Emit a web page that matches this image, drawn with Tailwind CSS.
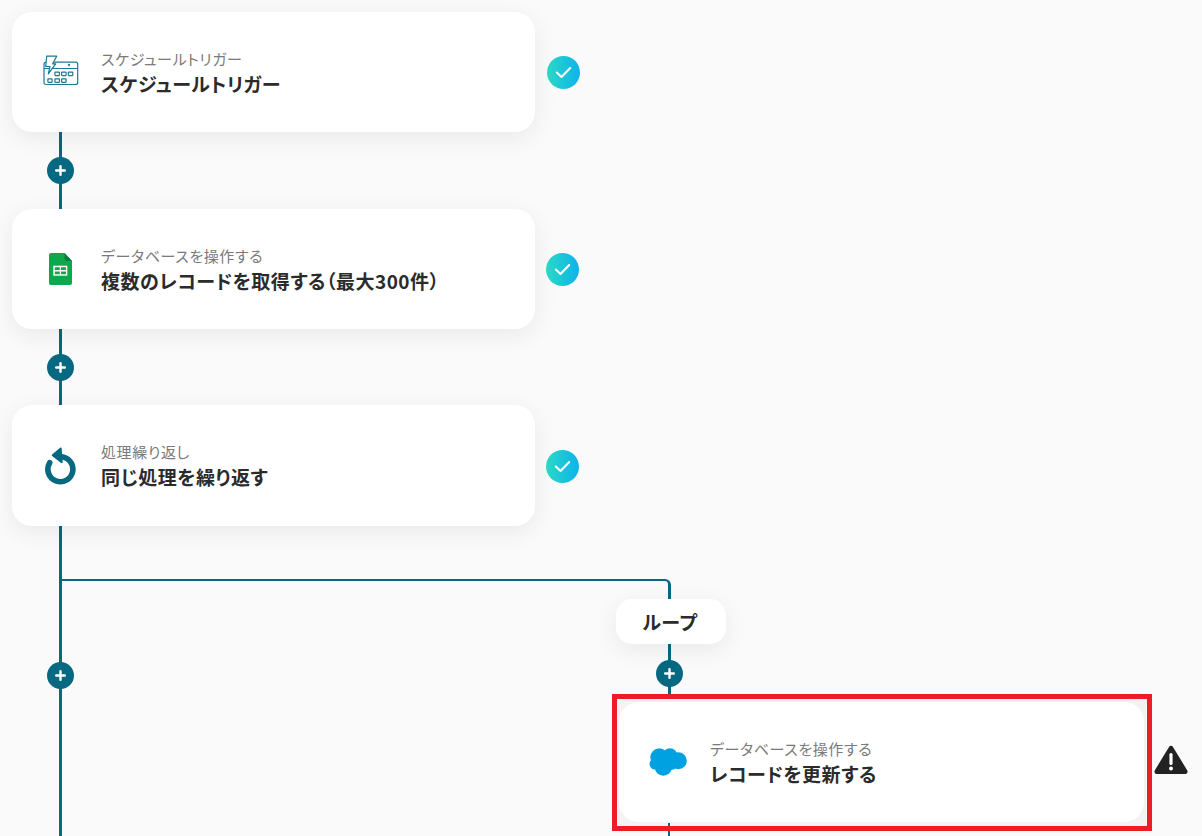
<!DOCTYPE html>
<html lang="ja">
<head>
<meta charset="utf-8">
<script src="https://cdn.jsdelivr.net/npm/@tailwindcss/browser@4"></script>
</head>
<body class="m-0 bg-[#fafafa]">
<div class="relative w-[1202px] h-[836px] overflow-hidden bg-[#fafafa] font-['Noto_Sans_CJK_JP','Noto_Sans',sans-serif] text-[#2b2b2b] [font-feature-settings:'palt']">

  <!-- connector lines -->
  <div class="absolute left-[59px] top-[130px] w-[3px] h-[706px] bg-[#066881]"></div>
  <div class="absolute left-[61px] top-[579px] w-[610px] h-[14px] border-t-2 border-r-[3px] border-[#066881] rounded-tr-[6px]"></div>
  <div class="absolute left-[668px] top-[590px] w-[3px] h-[110px] bg-[#066881]"></div>

  <!-- plus buttons -->
  <div class="absolute left-[47px] top-[157px] w-[27px] h-[27px] rounded-full bg-[#066881] flex items-center justify-center">
    <svg width="11" height="11" viewBox="0 0 11 11"><path d="M5.5 1.2v8.6M1.2 5.5h8.6" stroke="#fff" stroke-width="2.4" stroke-linecap="round"/></svg>
  </div>
  <div class="absolute left-[47px] top-[354px] w-[27px] h-[27px] rounded-full bg-[#066881] flex items-center justify-center">
    <svg width="11" height="11" viewBox="0 0 11 11"><path d="M5.5 1.2v8.6M1.2 5.5h8.6" stroke="#fff" stroke-width="2.4" stroke-linecap="round"/></svg>
  </div>
  <div class="absolute left-[47px] top-[662px] w-[27px] h-[27px] rounded-full bg-[#066881] flex items-center justify-center">
    <svg width="11" height="11" viewBox="0 0 11 11"><path d="M5.5 1.2v8.6M1.2 5.5h8.6" stroke="#fff" stroke-width="2.4" stroke-linecap="round"/></svg>
  </div>
  <div class="absolute left-[656px] top-[660px] w-[27px] h-[27px] rounded-full bg-[#066881] flex items-center justify-center">
    <svg width="11" height="11" viewBox="0 0 11 11"><path d="M5.5 1.2v8.6M1.2 5.5h8.6" stroke="#fff" stroke-width="2.4" stroke-linecap="round"/></svg>
  </div>

  <!-- card 1 -->
  <div class="absolute left-[12px] top-[12px] w-[523px] h-[120px] rounded-[20px] bg-white shadow-[0_6px_24px_rgba(0,0,0,0.07)] flex items-center pl-[31px] gap-[22px]">
    <svg class="w-[36px] h-[35px] shrink-0" viewBox="0 0 36 35" fill="none" stroke="#1b7a93" stroke-width="1.2">
      <path d="M1 9.200a2 2 0 0 1 2-2h29.700a2 2 0 0 1 2 2v18.300a2 2 0 0 1-2 2H3a2 2 0 0 1-2-2z"/>
      <path d="M1 13.500h34"/>
      <path d="M3.700 1.200h10L9.700 8.800h3L5.300 18.800 7 11.500H2.700z" fill="#fff" stroke-linejoin="round"/>
      <rect x="11.900" y="17.100" width="4.500" height="3.500" rx="0.500"/><rect x="18.600" y="17.100" width="4.500" height="3.500" rx="0.500"/><rect x="25.300" y="17.100" width="4.500" height="3.500" rx="0.500"/>
      <rect x="4.900" y="23.800" width="4.200" height="3.500" rx="0.500"/><rect x="11.900" y="23.800" width="4.500" height="3.500" rx="0.500"/><rect x="18.600" y="23.800" width="4.500" height="3.500" rx="0.500"/>
      <circle cx="26" cy="9.900" r="0.500" fill="#1b7a93"/>
    </svg>
    <div class="flex flex-col pt-[2px]">
      <div class="text-[15px] leading-[20px] tracking-[0.6px] text-[#7a7a7a]">スケジュールトリガー</div>
      <div class="text-[19px] leading-[28px] tracking-[0.5px] font-bold mt-px">スケジュールトリガー</div>
    </div>
  </div>

  <!-- card 2 -->
  <div class="absolute left-[12px] top-[209px] w-[523px] h-[120px] rounded-[20px] bg-white shadow-[0_6px_24px_rgba(0,0,0,0.07)] flex items-center pl-[37px] gap-[29px]">
    <svg class="w-[23px] h-[32px] shrink-0" viewBox="0 0 23 32">
      <path d="M2 0h13.500L23 8v22a2 2 0 0 1-2 2H2a2 2 0 0 1-2-2V2a2 2 0 0 1 2-2z" fill="#0da74e"/>
      <path d="M15.500 0L23 8h-5.500a2 2 0 0 1-2-2z" fill="#0a7d3c"/>
      <path d="M4.300 12.700h14v10h-14z" fill="#fff"/>
      <path d="M5.800 14.200h5v2.800h-5zM12 14.200h5v2.800h-5zM5.800 18.400h5v2.800h-5zM12 18.400h5v2.800h-5z" fill="#0da74e"/>
    </svg>
    <div class="flex flex-col pt-[2px]">
      <div class="text-[15px] leading-[20px] tracking-[0.6px] text-[#7a7a7a]">データベースを操作する</div>
      <div class="text-[19px] leading-[28px] tracking-[0.5px] font-bold mt-px">複数のレコードを取得する（最大300件）</div>
    </div>
  </div>

  <!-- card 3 -->
  <div class="absolute left-[12px] top-[405px] w-[523px] h-[121px] rounded-[20px] bg-white shadow-[0_6px_24px_rgba(0,0,0,0.07)] flex items-center pl-[32px] gap-[24px]">
    <svg class="w-[33px] h-[40px] shrink-0" viewBox="0 0 33 40" fill="none">
      <path d="M5.700 16.700A12.500 12.500 0 1 0 16.400 10.700" stroke="#066881" stroke-width="5.600" stroke-linecap="round"/>
      <path d="M16.700 2.500L8.700 9.200l9 7z" fill="#066881" stroke="#066881" stroke-width="2" stroke-linejoin="round"/>
    </svg>
    <div class="flex flex-col pt-[2px]">
      <div class="text-[15px] leading-[20px] tracking-[0.6px] text-[#7a7a7a]">処理繰り返し</div>
      <div class="text-[19px] leading-[28px] tracking-[0.5px] font-bold mt-px">同じ処理を繰り返す</div>
    </div>
  </div>

  <!-- status checks -->
  <div class="absolute left-[547px] top-[56px] w-[33px] h-[33px] rounded-full bg-gradient-to-r from-[#2bd9c4] to-[#10b2ea] flex items-center justify-center">
    <svg width="17" height="13" viewBox="0 0 17 13" fill="none"><path d="M1.800 6.500l4.700 4.500 8.700-9" stroke="#fff" stroke-width="2" stroke-linecap="round" stroke-linejoin="round"/></svg>
  </div>
  <div class="absolute left-[546px] top-[253px] w-[33px] h-[33px] rounded-full bg-gradient-to-r from-[#2bd9c4] to-[#10b2ea] flex items-center justify-center">
    <svg width="17" height="13" viewBox="0 0 17 13" fill="none"><path d="M1.800 6.500l4.700 4.500 8.700-9" stroke="#fff" stroke-width="2" stroke-linecap="round" stroke-linejoin="round"/></svg>
  </div>
  <div class="absolute left-[546px] top-[450px] w-[33px] h-[33px] rounded-full bg-gradient-to-r from-[#2bd9c4] to-[#10b2ea] flex items-center justify-center">
    <svg width="17" height="13" viewBox="0 0 17 13" fill="none"><path d="M1.800 6.500l4.700 4.500 8.700-9" stroke="#fff" stroke-width="2" stroke-linecap="round" stroke-linejoin="round"/></svg>
  </div>

  <!-- loop label -->
  <div class="absolute left-[616px] top-[599px] w-[110px] h-[45px] pt-[2px] pr-[2px] rounded-[16px] bg-white shadow-[0_6px_24px_rgba(0,0,0,0.07)] flex items-center justify-center text-[19px] tracking-[0.5px] font-bold">ループ</div>

  <!-- highlighted card -->
  <div class="absolute left-[612px] top-[694px] w-[540px] h-[137px] border-[5px] border-[#ee1c25] bg-[#f3f3f3] pt-[3px] pl-[2px] pr-[3px]">
    <div class="w-full h-[120px] rounded-[20px] bg-white flex items-center pl-[30px] gap-[22px]">
      <svg class="w-[39px] h-[30px] shrink-0" viewBox="0 0 39 30">
        <g fill="#00a1e0"><circle cx="10.300" cy="10.300" r="9"/><circle cx="21" cy="8.700" r="7.500"/><circle cx="29.300" cy="13.700" r="8.500"/><circle cx="14.300" cy="20.300" r="8.500"/><circle cx="6" cy="17" r="5.500"/><circle cx="22" cy="16" r="7"/></g>
      </svg>
      <div class="flex flex-col pt-[2px]">
        <div class="text-[15px] leading-[20px] tracking-[0.6px] text-[#7a7a7a]">データベースを操作する</div>
        <div class="text-[19px] leading-[28px] tracking-[0.5px] font-bold mt-px">レコードを更新する</div>
      </div>
    </div>
  </div>
  <div class="absolute left-[668px] top-[823px] w-[2px] h-[3px] bg-[#066881]"></div>
  <div class="absolute left-[668px] top-[831px] w-[2px] h-[5px] bg-[#066881]"></div>

  <!-- warning icon -->
  <svg class="absolute left-[1154px] top-[745px]" width="34" height="30" viewBox="0 0 34 30">
    <path d="M17 3.500L31 26.500H3z" fill="#222" stroke="#222" stroke-width="5" stroke-linejoin="round"/>
    <path d="M17 9.500v9" stroke="#fff" stroke-width="3.200" stroke-linecap="round"/>
    <circle cx="17" cy="23.500" r="2" fill="#fff"/>
  </svg>
</div>
</body>
</html>
